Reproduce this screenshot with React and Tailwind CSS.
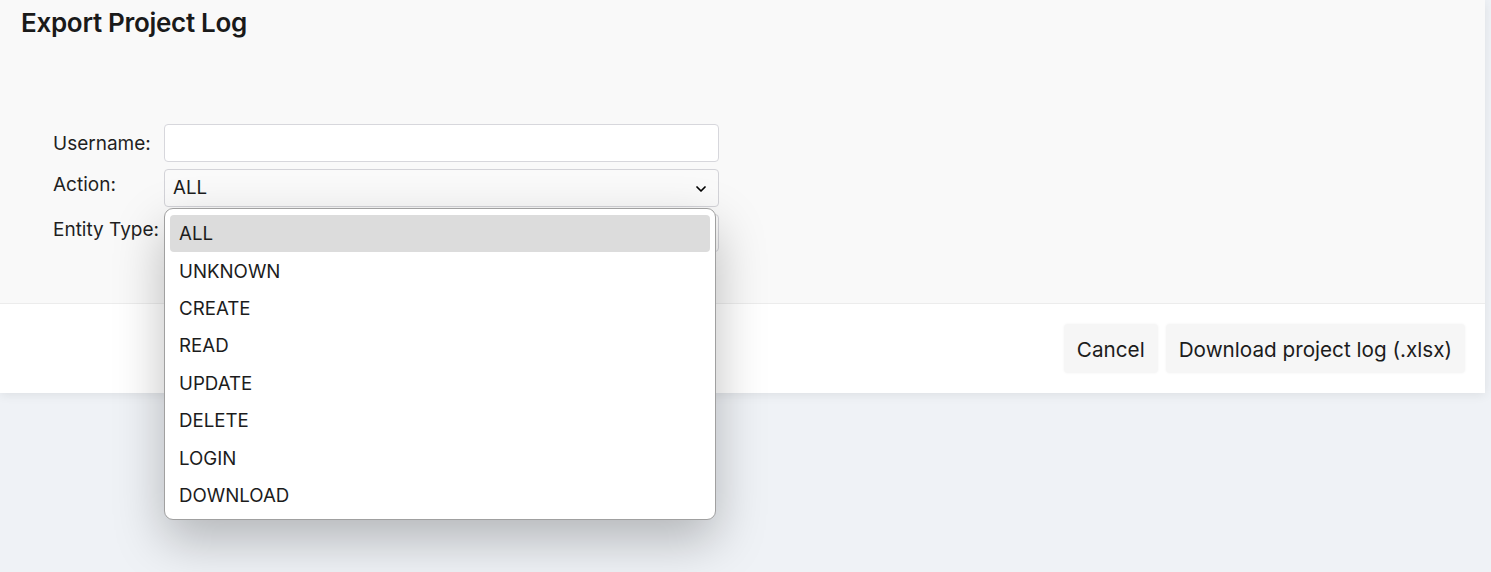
import React from "react";
import { ChevronDown } from "lucide-react";

const actions = ["ALL", "UNKNOWN", "CREATE", "READ", "UPDATE", "DELETE", "LOGIN", "DOWNLOAD"];

const Row = ({ label, children, labelPad = "" }) => (
  <div className="flex items-start">
    <label className={`w-[111px] shrink-0 text-[19px] leading-[26px] text-[#1f1f1f] ${labelPad}`}>{label}</label>
    {children}
  </div>
);

const App = () => {
  return (
    <div className="min-h-[572px] bg-[#eff2f6] font-['Inter',sans-serif] text-[#1c1c1c]">
      <div className="relative w-[1485px] bg-white shadow-[0_2px_10px_rgba(0,0,0,0.08)]">
        <div className="h-[304px] border-b border-[#ececec] bg-[#f9f9f9] px-[21px] pt-[6px]">
          <h1 className="text-[26px] font-semibold leading-[34px] tracking-[-0.3px] text-[#1a1a1a]">Export Project Log</h1>
          <div className="mt-[84px] flex flex-col gap-[7px] pl-[32px]">
            <Row label="Username:" labelPad="pt-[7px]">
              <input type="text" className="h-[38px] w-[555px] rounded-[4px] border border-[#d7d7dc] bg-white px-2 outline-none" />
            </Row>
            <Row label="Action:" labelPad="pt-[3px]">
              <div className="flex h-[38px] w-[555px] items-center justify-between rounded-[4px] border border-[#d3d3d8] bg-[#fafafa] pl-[8px] pr-[9px] pt-[1px] text-[18.7px]">
                <span>ALL</span>
                <ChevronDown size={16} strokeWidth={2.6} className="text-black" />
              </div>
            </Row>
            <Row label="Entity Type:" labelPad="pt-[3px]">
              <div className="flex h-[38px] w-[555px] items-center justify-between rounded-[4px] border border-[#d3d3d8] bg-[#fafafa] pl-[8px] pr-[9px] text-[18.7px]">
                <span>ALL</span>
                <ChevronDown size={16} strokeWidth={2.6} className="text-black" />
              </div>
            </Row>
          </div>
        </div>
        <div className="flex h-[89px] items-center justify-end gap-[8px] pr-[20px]">
          <button className="h-[49px] rounded-[4px] bg-[#f6f6f6] px-[13px] pt-[2px] text-[20.7px] text-[#1c1c1c] shadow-[0_0_3px_rgba(0,0,0,0.05)]">Cancel</button>
          <button className="h-[49px] rounded-[4px] bg-[#f6f6f6] px-[13px] pt-[2px] text-[20.7px] text-[#1c1c1c] shadow-[0_0_3px_rgba(0,0,0,0.05)]">Download project log (.xlsx)</button>
        </div>

        <ul className="absolute left-[164px] top-[208px] w-[552px] rounded-[9px] border-[1.5px] border-[#a0a0a0] bg-white px-[5px] pb-[5px] pt-[6px] shadow-[0_20px_50px_rgba(0,0,0,0.25)]">
          {actions.map((a, i) => (
            <li
              key={a}
              className={`flex h-[37.4px] items-center rounded-[4px] px-[9px] pt-[1px] text-[18.7px] text-[#1c1c1c] ${i === 0 ? "bg-[#dcdcdc]" : ""}`}
            >
              {a}
            </li>
          ))}
        </ul>
      </div>
    </div>
  );
};

export default App;
